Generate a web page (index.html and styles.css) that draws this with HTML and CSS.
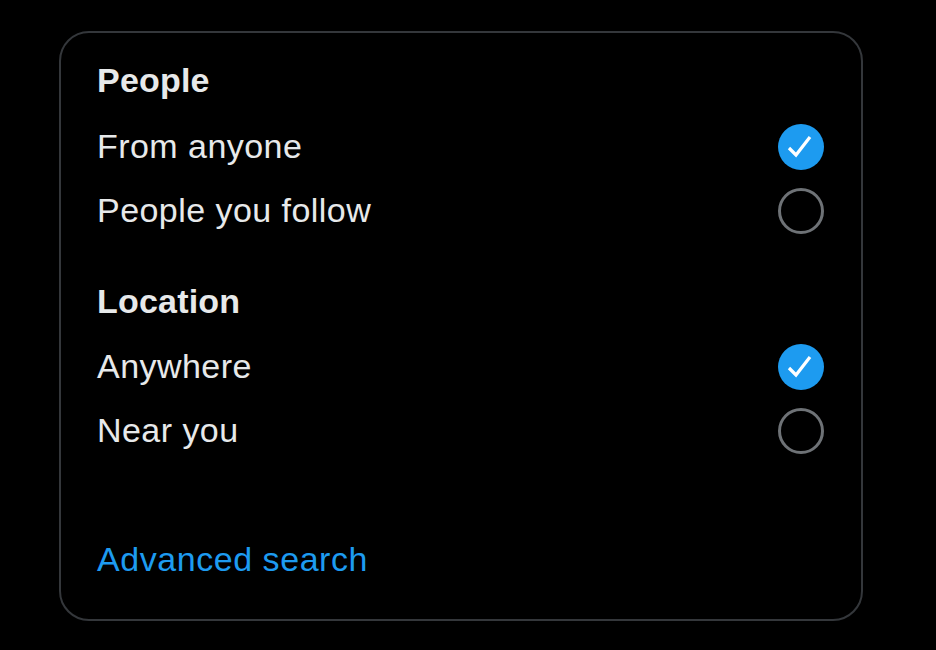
FILE: index.html
```html
<!DOCTYPE html>
<html lang="en">
<head>
<meta charset="utf-8">
<title>Search filters</title>
<link rel="stylesheet" href="styles.css">
</head>
<body>
  <section class="card">
    <h2 class="heading">People</h2>
    <div class="row">
      <span class="label">From anyone</span>
      <span class="check checked">
        <svg viewBox="0 0 46 46" width="46" height="46"><polyline points="11,24 18,31 32,13" fill="none" stroke="#ffffff" stroke-width="3.2"/></svg>
      </span>
    </div>
    <div class="row">
      <span class="label">People you follow</span>
      <span class="check"></span>
    </div>

    <h2 class="heading heading-second">Location</h2>
    <div class="row">
      <span class="label">Anywhere</span>
      <span class="check checked">
        <svg viewBox="0 0 46 46" width="46" height="46"><polyline points="11,24 18,31 32,13" fill="none" stroke="#ffffff" stroke-width="3.2"/></svg>
      </span>
    </div>
    <div class="row">
      <span class="label">Near you</span>
      <span class="check"></span>
    </div>

    <a class="advanced" href="#">Advanced search</a>
  </section>
</body>
</html>
```

FILE: styles.css
```css
html, body {
  margin: 0;
  padding: 0;
  background: #000000;
}

body {
  font-family: "Liberation Sans", Arial, sans-serif;
  color: #e7e9ea;
  padding: 31px 0 0 59px;
}

.card {
  box-sizing: border-box;
  width: 804px;
  height: 590px;
  border: 2px solid #34373b;
  border-radius: 30px;
  padding: 27px 37px 0 36px;
  display: flex;
  flex-direction: column;
}

.heading {
  margin: 0;
  font-size: 34px;
  line-height: 40px;
  font-weight: 700;
  color: #e7e9ea;
  margin-bottom: 15px;
  letter-spacing: 0.2px;
}

.heading-second {
  margin-top: 38px;
  margin-bottom: 14px;
}

.row {
  height: 64px;
  display: flex;
  align-items: center;
  justify-content: space-between;
}

.label {
  font-size: 34px;
  line-height: 40px;
  margin-top: -2px;
  letter-spacing: 0.45px;
}

.check {
  box-sizing: border-box;
  width: 46px;
  height: 46px;
  border-radius: 50%;
  border: 3px solid #6e7276;
  display: block;
  flex: none;
}

.check svg {
  display: block;
}

.check.checked {
  border: none;
  background: #1d9bf0;
}

.advanced {
  margin-top: 76px;
  font-size: 34px;
  line-height: 40px;
  color: #1d9bf0;
  text-decoration: none;
  align-self: flex-start;
  letter-spacing: 0.55px;
}
```
